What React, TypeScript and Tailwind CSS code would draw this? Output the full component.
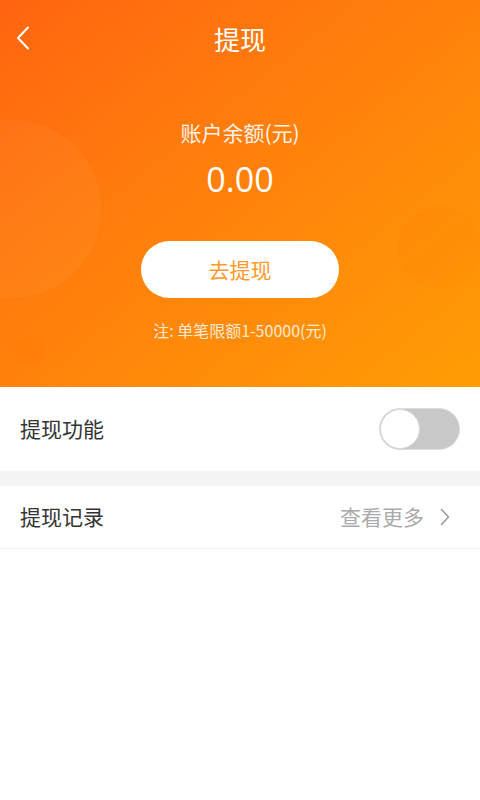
import React from "react";

export default function App() {
  return (
    <div className="w-full min-h-[800px] bg-white" style={{ fontFamily: '"Noto Sans CJK SC", "Noto Sans", sans-serif' }}>
      <div className="relative h-[387px] overflow-hidden bg-linear-to-br from-[#ff6410] to-[#ff9d04]">
        <div className="absolute left-[-77px] top-[120px] h-[178px] w-[178px] rounded-full bg-[#ffffff]/[0.035]" />
        <div className="absolute left-[15px] top-[336px] h-[31px] w-[31px] rounded-full bg-[#ff6a00]/[0.1]" />
        <div className="absolute left-[398px] top-[205px] h-[84px] w-[84px] rounded-full bg-[#ff6a00]/[0.06]" />

        <div className="relative flex flex-col items-center">
          <div className="relative flex h-[78px] w-full items-center justify-center">
            <svg className="absolute left-[15px] top-[26px]" width="16" height="24" viewBox="0 0 16 24" fill="none">
              <path d="M13 1.5 L3 12 L13 22.5" stroke="white" strokeWidth="2" strokeLinecap="round" strokeLinejoin="round" />
            </svg>
            <span className="text-[26px] leading-[34px] text-white">提现</span>
          </div>
          <div className="mt-[40px] text-[21px] leading-[29px] text-white/90">账户余额(元)</div>
          <div className="mt-[12px] text-[34px] leading-[40px] text-white" style={{ fontFamily: '"Open Sans", "Noto Sans", sans-serif' }}>0.00</div>
          <button className="mt-[42px] flex h-[57px] w-[198px] items-center justify-center rounded-full bg-white text-[21px] text-[#ff9a2a]">
            去提现
          </button>
          <div className="mt-[22px] text-[16px] leading-[20px] text-white/80">注: 单笔限额1-50000(元)</div>
        </div>
      </div>

      <div className="flex h-[84px] items-center justify-between pl-[20px] pr-[20px]">
        <span className="text-[21px] text-[#333333]">提现功能</span>
        <div className="flex h-[42px] w-[81px] items-center rounded-full border border-[#dcdcdc] bg-[#c8c8c8]">
          <div className="h-[40px] w-[40px] rounded-full border border-[#d8d8d8] bg-white" />
        </div>
      </div>
      <div className="h-[15px] bg-[#f4f4f4]" />
      <div className="flex h-[63px] items-center justify-between border-b border-[#f0f0f0] pl-[20px] pr-[30px]">
        <span className="text-[21px] text-[#333333]">提现记录</span>
        <div className="flex items-center gap-[16px]">
          <span className="text-[21px] text-[#aaaaaa]">查看更多</span>
          <svg width="10" height="18" viewBox="0 0 10 18" fill="none">
            <path d="M1.5 1.5 L8.5 9 L1.5 16.5" stroke="#999999" strokeWidth="1.6" strokeLinecap="round" strokeLinejoin="round" />
          </svg>
        </div>
      </div>
    </div>
  );
}
